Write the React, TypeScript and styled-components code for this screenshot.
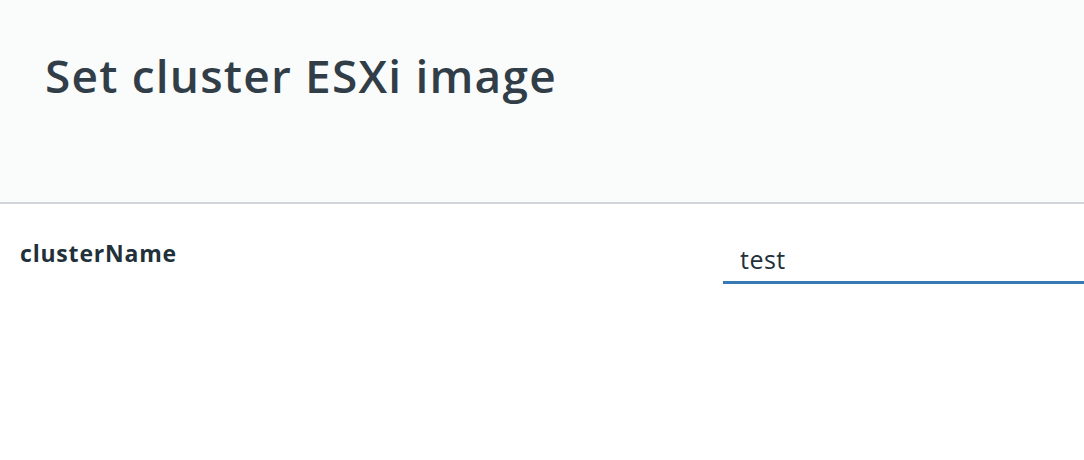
import React from "react";
import styled, { createGlobalStyle } from "styled-components";

const Global = createGlobalStyle`
  html, body { margin: 0; padding: 0; background: #ffffff; }
  body { font-family: "Open Sans", sans-serif; color: #2b3a44; }
`;

const Header = styled.header`
  height: 202px;
  background: #fafbfb;
  border-bottom: 2px solid #cfd5d8;
  box-sizing: content-box;
  padding: 0 45px;
  display: flex;
`;

const Title = styled.h1`
  margin: 45px 0 0 0;
  font-family: "Open Sans", sans-serif;
  font-weight: 560;
  font-size: 46px;
  line-height: 60px;
  color: #313e48;
  letter-spacing: 1.2px;
`;

const Row = styled.div`
  display: grid;
  grid-template-columns: 723px 1fr;
  padding-top: 36px;
`;

const Label = styled.label`
  padding-left: 20px;
  margin-top: -2px;
  font-family: "Open Sans", sans-serif;
  font-weight: 700;
  font-size: 23px;
  line-height: 30px;
  color: #22303a;
  letter-spacing: 0.8px;
`;

const Input = styled.input`
  border: none;
  border-bottom: 3px solid #3679b3;
  outline: none;
  background: transparent;
  font-family: "Open Sans", sans-serif;
  font-size: 25px;
  color: #22303a;
  padding: 3px 17px 7px 17px;
  height: 44px;
  box-sizing: border-box;
  width: 100%;
  letter-spacing: 0.5px;
`;

export default function App() {
  return (
    <>
      <Global />
      <Header>
        <Title>Set cluster ESXi image</Title>
      </Header>
      <Row>
        <Label htmlFor="cn">clusterName</Label>
        <Input id="cn" defaultValue="test" readOnly />
      </Row>
    </>
  );
}
